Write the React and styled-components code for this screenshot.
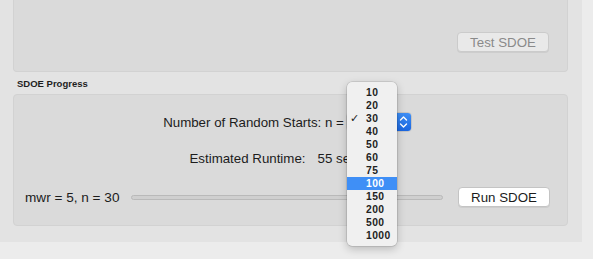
import React from "react";
import styled, { createGlobalStyle } from "styled-components";

const GlobalStyle = createGlobalStyle`
  html, body {
    margin: 0;
    padding: 0;
    background: #ececec;
  }
  body {
    font-family: "Liberation Sans", Arial, sans-serif;
    color: #222;
  }
`;

const Window = styled.div`
  width: 593px;
  height: 259px;
  background: #ececec;
  position: relative;
  overflow: hidden;
`;

const Panel = styled.div`
  width: 582px;
  height: 242px;
  box-sizing: border-box;
  background: #e3e3e3;
  padding: 0 14px 0 13px;
  display: flex;
  flex-direction: column;
`;

const GroupBox = styled.div`
  box-sizing: border-box;
  background: #dadada;
  border: 1px solid #d2d2d2;
  border-radius: 4px;
  ${(p) => p.$cut && "border-top: none; border-radius: 0 0 4px 4px;"}
  height: ${(p) => p.$h}px;
  display: flex;
  flex-direction: column;
`;

const TopBox = styled(GroupBox)`
  justify-content: flex-end;
  align-items: flex-end;
  padding: 0 18px 19px 0;
`;

const SectionLabel = styled.div`
  height: 22px;
  display: flex;
  align-items: center;
  padding-left: 4px;
  font-size: 9.5px;
  font-weight: bold;
  color: #1e1e1e;
`;

const ProgressBox = styled(GroupBox)`
  padding: 17px 17px 18px 11px;
`;

const CenterRow = styled.div`
  height: 20px;
  display: flex;
  align-items: center;
  justify-content: center;
  gap: ${(p) => p.$gap || 0}px;
  margin-top: ${(p) => p.$mt || 0}px;
  font-size: 13.3px;
  color: #1c1c1c;
  white-space: nowrap;
`;

const ProgressRow = styled.div`
  height: 20px;
  margin-top: 19px;
  display: flex;
  align-items: center;
  font-size: 13.6px;
  color: #1c1c1c;
  white-space: nowrap;
`;

const Track = styled.div`
  flex: 1;
  height: 5px;
  margin: 1px 15px 0 12px;
  box-sizing: border-box;
  background: #cfcfcf;
  border: 1px solid #b9b9b9;
  border-radius: 3px;
`;

const PushButton = styled.div`
  width: 92px;
  height: 20px;
  box-sizing: border-box;
  display: flex;
  align-items: center;
  justify-content: center;
  border-radius: 4px;
  font-size: 13.3px;
  background: ${(p) => (p.$disabled ? "#e9e9e9" : "#ffffff")};
  color: ${(p) => (p.$disabled ? "#8a8a8a" : "#1c1c1c")};
  border: 1px solid ${(p) => (p.$disabled ? "#cbcbcb" : "#c4c4c4")};
  box-shadow: 0 1px 0 rgba(0, 0, 0, 0.06);
`;

const Popup = styled.div`
  width: 66px;
  height: 20px;
  box-sizing: border-box;
  display: flex;
  justify-content: flex-end;
  background: #fff;
  border: 1px solid #c4c4c4;
  border-radius: 4px;
  overflow: hidden;
`;

const Stepper = styled.div`
  width: 15px;
  height: 100%;
  background: linear-gradient(#3d8ef5, #1a66e0);
  display: flex;
  align-items: center;
  justify-content: center;
`;

const Menu = styled.div`
  position: absolute;
  left: 347px;
  top: 82px;
  width: 50px;
  padding: 4px 0;
  box-sizing: border-box;
  background: #f0f0f0;
  border-radius: 5px;
  box-shadow: 0 0 0 0.5px rgba(0, 0, 0, 0.18), 0 3px 9px rgba(0, 0, 0, 0.22);
`;

const MenuItem = styled.div`
  height: 13px;
  position: relative;
  display: flex;
  align-items: center;
  padding-left: 19px;
  font-size: 10.3px;
  font-weight: bold;
  letter-spacing: 0.4px;
  color: ${(p) => (p.$active ? "#fff" : "#222")};
  background: ${(p) => (p.$active ? "#3f8ff6" : "transparent")};
`;

const Check = styled.span`
  position: absolute;
  left: 3px;
  top: 0;
  font-size: 11px;
  font-weight: normal;
  color: #222;
`;

const options = [10, 20, 30, 40, 50, 60, 75, 100, 150, 200, 500, 1000];

const StepperIcon = () => (
  <svg width="9" height="14" viewBox="0 0 9 14">
    <path
      d="M1.5 5 L4.5 2 L7.5 5 M1.5 9 L4.5 12 L7.5 9"
      fill="none"
      stroke="#fff"
      strokeWidth="1.4"
      strokeLinecap="round"
      strokeLinejoin="round"
    />
  </svg>
);

const App = () => {
  return (
    <Window>
      <GlobalStyle />
      <Panel>
        <TopBox $h={72} $cut>
          <PushButton $disabled>Test SDOE</PushButton>
        </TopBox>
        <SectionLabel>SDOE Progress</SectionLabel>
        <ProgressBox $h={132}>
          <CenterRow $gap={2}>
            <span>Number of Random Starts: n =</span>
            <Popup>
              <Stepper>
                <StepperIcon />
              </Stepper>
            </Popup>
          </CenterRow>
          <CenterRow $mt={16} $gap={12}>
            <span>Estimated Runtime:</span>
            <span>55 seconds</span>
          </CenterRow>
          <ProgressRow>
            <span>mwr = 5, n = 30</span>
            <Track />
            <PushButton>Run SDOE</PushButton>
          </ProgressRow>
        </ProgressBox>
      </Panel>
      <Menu>
        {options.map((n) => (
          <MenuItem key={n} $active={n === 100}>
            {n === 30 && <Check>✓</Check>}
            {n}
          </MenuItem>
        ))}
      </Menu>
    </Window>
  );
};

export default App;
